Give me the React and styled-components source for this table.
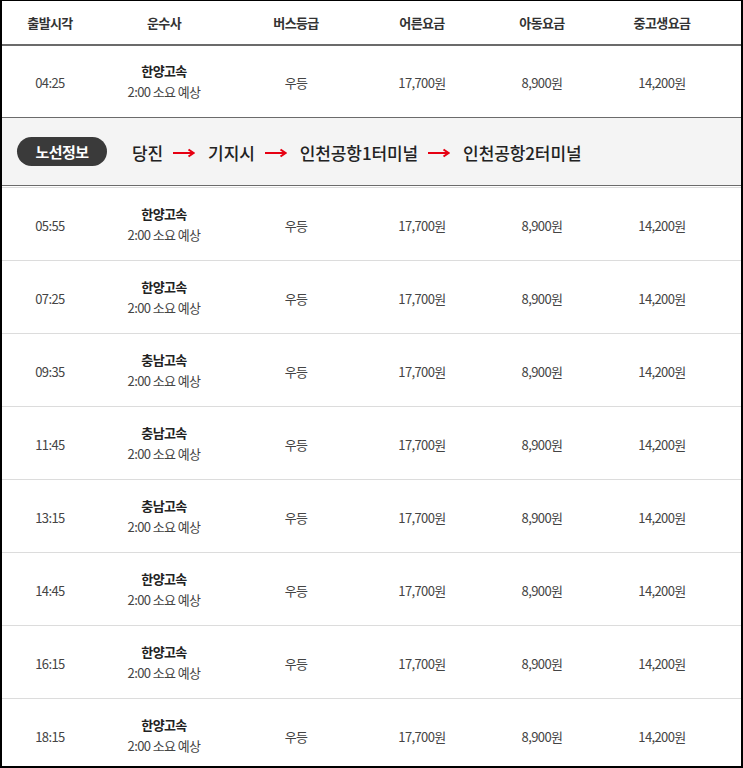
import React from 'react';
import styled, { createGlobalStyle } from 'styled-components';

const GlobalStyle = createGlobalStyle`
    html, body {
        margin: 0;
        padding: 0;
        background: #fff;
    }
    body {
        font-family: "Noto Sans CJK KR", "Noto Sans", sans-serif;
        color: #333;
    }
`;

const COLUMNS = '96px 132px 132px 120px 120px 120px 1fr';

const Frame = styled.div`
    box-sizing: border-box;
    height: 768px;
    overflow: hidden;
    border: 2px solid #000;
    border-top-width: 1px;
    background: #fff;
`;

const HeaderRow = styled.div`
    display: grid;
    grid-template-columns: ${COLUMNS};
    height: 43px;
    align-items: center;
    border-bottom: 2px solid #6b6b6b;
`;

const HeaderCell = styled.div`
    text-align: center;
    font-size: 13px;
    font-weight: 700;
    letter-spacing: -0.6px;
    color: #333;
    line-height: 16px;
`;

const Row = styled.div`
    display: grid;
    grid-template-columns: ${COLUMNS};
    height: ${props => props.$height || 72}px;
    align-items: center;
    border-top: ${props => props.$noBorder ? 'none' : '1px solid #dcdcdc'};
`;

const Cell = styled.div`
    text-align: center;
    font-size: 13px;
    letter-spacing: -0.6px;
    color: #444;
    line-height: 18px;
    padding-top: 3px;
`;

const CompanyCell = styled.div`
    display: flex;
    flex-direction: column;
    align-items: center;
    gap: 3px;
    letter-spacing: -0.6px;
`;

const Company = styled.div`
    font-size: 13px;
    font-weight: 700;
    color: #222;
    line-height: 18px;
`;

const Duration = styled.div`
    font-size: 13px;
    color: #444;
    line-height: 18px;
`;

const RouteBar = styled.div`
    display: flex;
    align-items: center;
    height: 67px;
    padding-left: 15px;
    background: #f4f4f4;
    border-top: 1px solid #6b6b6b;
    border-bottom: 1px solid #6b6b6b;
    margin-bottom: 1px;
`;

const RouteBadge = styled.span`
    display: inline-flex;
    align-items: center;
    justify-content: center;
    width: 90px;
    height: 29px;
    border-radius: 15px;
    background: #3a3a3a;
    color: #fff;
    font-size: 15px;
    font-weight: 700;
    letter-spacing: -0.6px;
    margin-right: 25px;
`;

const Stops = styled.div`
    display: flex;
    align-items: center;
    gap: 10px;
    padding-top: 2px;
`;

const Stop = styled.span`
    font-size: 17px;
    font-weight: 500;
    color: #222;
    letter-spacing: -0.1px;
    line-height: 22px;
`;

const ArrowIcon = styled.svg`
    width: 22px;
    height: 10px;
    margin-right: 3px;
    flex-shrink: 0;
`;

const Arrow = () => (
    <ArrowIcon viewBox="0 0 22 10">
        <path d="M0 5 H20" stroke="#e60012" strokeWidth="2" fill="none" />
        <path d="M15.5 1.5 L20.5 5 L15.5 8.5" stroke="#e60012" strokeWidth="2" fill="none" />
    </ArrowIcon>
);

const headers = ['출발시각', '운수사', '버스등급', '어른요금', '아동요금', '중고생요금'];

const trips = [
    { time: '04:25', company: '한양고속' },
    { time: '05:55', company: '한양고속' },
    { time: '07:25', company: '한양고속' },
    { time: '09:35', company: '충남고속' },
    { time: '11:45', company: '충남고속' },
    { time: '13:15', company: '충남고속' },
    { time: '14:45', company: '한양고속' },
    { time: '16:15', company: '한양고속' },
    { time: '18:15', company: '한양고속' },
];

const stops = ['당진', '기지시', '인천공항1터미널', '인천공항2터미널'];

const TripRow = ({ trip, first }) => (
    <Row $height={first ? 71 : 72} $noBorder={first}>
        <Cell>{trip.time}</Cell>
        <CompanyCell>
            <Company>{trip.company}</Company>
            <Duration>2:00 소요 예상</Duration>
        </CompanyCell>
        <Cell>우등</Cell>
        <Cell>17,700원</Cell>
        <Cell>8,900원</Cell>
        <Cell>14,200원</Cell>
        <div />
    </Row>
);

const App = () => {
    return <>
        <GlobalStyle />
        <Frame>
            <HeaderRow>
                {headers.map(h => <HeaderCell key={h}>{h}</HeaderCell>)}
                <div />
            </HeaderRow>
            <TripRow trip={trips[0]} first />
            <RouteBar>
                <RouteBadge>노선정보</RouteBadge>
                <Stops>
                    {stops.map((s, i) => <React.Fragment key={s}>
                        {i > 0 && <Arrow />}
                        <Stop>{s}</Stop>
                    </React.Fragment>)}
                </Stops>
            </RouteBar>
            {trips.slice(1).map(t => <TripRow key={t.time} trip={t} />)}
        </Frame>
    </>;
};

export default App;
